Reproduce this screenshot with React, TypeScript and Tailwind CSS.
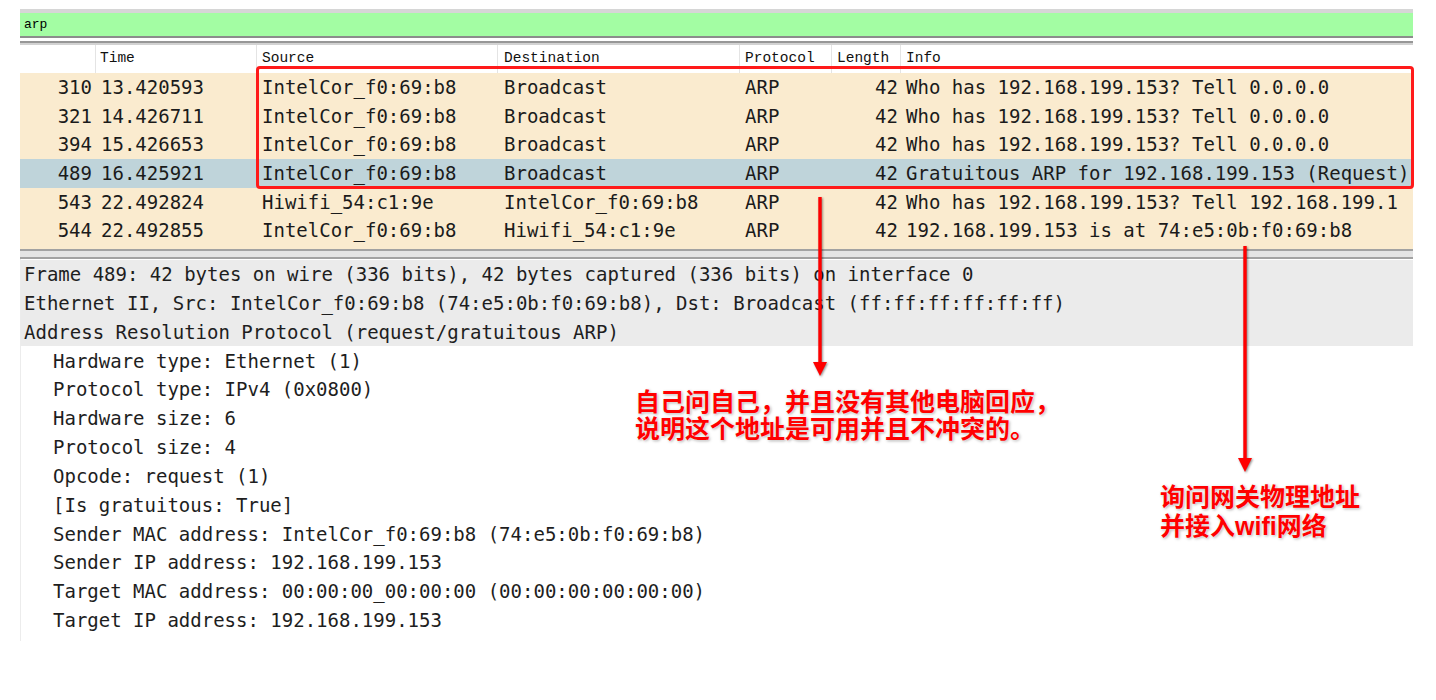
import React from 'react';

interface Packet {
  no: string;
  time: string;
  src: string;
  dst: string;
  proto: string;
  len: string;
  info: string;
  selected?: boolean;
}

const packets: Packet[] = [
  { no: '310', time: '13.420593', src: 'IntelCor_f0:69:b8', dst: 'Broadcast', proto: 'ARP', len: '42', info: 'Who has 192.168.199.153? Tell 0.0.0.0' },
  { no: '321', time: '14.426711', src: 'IntelCor_f0:69:b8', dst: 'Broadcast', proto: 'ARP', len: '42', info: 'Who has 192.168.199.153? Tell 0.0.0.0' },
  { no: '394', time: '15.426653', src: 'IntelCor_f0:69:b8', dst: 'Broadcast', proto: 'ARP', len: '42', info: 'Who has 192.168.199.153? Tell 0.0.0.0' },
  { no: '489', time: '16.425921', src: 'IntelCor_f0:69:b8', dst: 'Broadcast', proto: 'ARP', len: '42', info: 'Gratuitous ARP for 192.168.199.153 (Request)', selected: true },
  { no: '543', time: '22.492824', src: 'Hiwifi_54:c1:9e', dst: 'IntelCor_f0:69:b8', proto: 'ARP', len: '42', info: 'Who has 192.168.199.153? Tell 192.168.199.1' },
  { no: '544', time: '22.492855', src: 'IntelCor_f0:69:b8', dst: 'Hiwifi_54:c1:9e', proto: 'ARP', len: '42', info: '192.168.199.153 is at 74:e5:0b:f0:69:b8' },
];

// summary lines are shaded, the fields below are indented
const details: { text: string; top?: boolean }[] = [
  { text: 'Frame 489: 42 bytes on wire (336 bits), 42 bytes captured (336 bits) on interface 0', top: true },
  { text: 'Ethernet II, Src: IntelCor_f0:69:b8 (74:e5:0b:f0:69:b8), Dst: Broadcast (ff:ff:ff:ff:ff:ff)', top: true },
  { text: 'Address Resolution Protocol (request/gratuitous ARP)', top: true },
  { text: 'Hardware type: Ethernet (1)' },
  { text: 'Protocol type: IPv4 (0x0800)' },
  { text: 'Hardware size: 6' },
  { text: 'Protocol size: 4' },
  { text: 'Opcode: request (1)' },
  { text: '[Is gratuitous: True]' },
  { text: 'Sender MAC address: IntelCor_f0:69:b8 (74:e5:0b:f0:69:b8)' },
  { text: 'Sender IP address: 192.168.199.153' },
  { text: 'Target MAC address: 00:00:00_00:00:00 (00:00:00:00:00:00)' },
  { text: 'Target IP address: 192.168.199.153' },
];

const cols = 'grid grid-cols-[76px_161px_241px_242px_92px_69px_512px]';

const Arrow: React.FC<{ className: string; height: number }> = ({ className, height }) => (
  <svg
    className={`absolute drop-shadow-[1px_1px_1px_rgba(0,0,0,0.45)] ${className}`}
    width="20"
    height={height}
    viewBox={`0 0 20 ${height}`}
  >
    <rect x="8.3" y="2" width="3.4" height={height - 16} fill="#ff0000" />
    <polygon points={`3,${height - 17} 17,${height - 17} 10,${height - 3}`} fill="#ff0000" />
  </svg>
);

const App: React.FC = () => {
  return (
    <div className="relative w-[1436px] h-[700px] bg-white overflow-hidden text-[#1b1b1b]">
      <div className="pt-[9px] pl-[20px] w-[1413px]">
        {/* filter toolbar */}
        <div className="h-[4px] bg-[#d6d6d6]" />
        <div className="h-[25px] bg-[#a3fda3] border-b-2 border-[#8c8c8c] flex items-center pl-[4px] font-['Liberation_Mono',monospace] text-[13px] text-black">
          arp
        </div>
        <div className="h-[3px]" />
        <div className="h-[4px] border-t-2 border-[#979797] bg-[#d2d2d2]" />

        {/* packet list */}
        <div className={`${cols} h-[28px] items-center bg-white font-['Liberation_Mono',monospace] text-[14.5px] text-[#111]`}>
          <div className="h-full border-r border-[#e4e4e4]" />
          <div className="h-full flex items-center pl-[4px] border-r border-[#e4e4e4]">Time</div>
          <div className="h-full flex items-center pl-[5px] border-r border-[#e4e4e4]">Source</div>
          <div className="h-full flex items-center pl-[6px] border-r border-[#e4e4e4]">Destination</div>
          <div className="h-full flex items-center pl-[5px] border-r border-[#e4e4e4]">Protocol</div>
          <div className="h-full flex items-center pl-[5px] border-r border-[#e4e4e4]">Length</div>
          <div className="h-full flex items-center pl-[5px]">Info</div>
        </div>
        <div className="bg-[#faebcf] pb-[4px] font-['DejaVu_Sans_Mono',monospace] text-[19px] whitespace-pre">
          {packets.map((p) => (
            <div
              key={p.no}
              className={`${cols} h-[28.67px] items-center pb-[1px] ${p.selected ? 'bg-[#bfd4da]' : ''}`}
            >
              <div className="text-right pr-[4px]">{p.no}</div>
              <div className="pl-[5px]">{p.time}</div>
              <div className="pl-[5px]">{p.src}</div>
              <div className="pl-[6px]">{p.dst}</div>
              <div className="pl-[5px]">{p.proto}</div>
              <div className="text-right pr-[3px]">{p.len}</div>
              <div className="pl-[5px]">{p.info}</div>
            </div>
          ))}
        </div>

        {/* splitter */}
        <div className="h-[10px] border-t-2 border-b-2 border-[#a2a2a2] bg-[#e4e4e4]" />

        {/* packet details */}
        <div className="h-[382px] border-l border-[#ececec] pt-[1px] font-['DejaVu_Sans_Mono',monospace] text-[19px] whitespace-pre text-[#1e1e1e]">
          {details.map((d, i) => (
            <div
              key={i}
              className={`h-[28.83px] flex items-center ${d.top ? 'bg-[#ebebeb] pl-[3px]' : 'pl-[32px]'}`}
            >
              {d.text}
            </div>
          ))}
        </div>
      </div>

      {/* annotations */}
      <div className="absolute left-[256px] top-[66px] w-[1158px] h-[123px] border-[3px] border-[#ff1a1a] rounded-[4px]" />
      <Arrow className="left-[810px] top-[195px]" height={184} />
      <Arrow className="left-[1235px] top-[244px]" height={231} />

      <div className="absolute left-[635px] top-[389px] font-['Liberation_Sans','Noto_Sans_CJK_SC',sans-serif] font-bold text-[25px] leading-[27px] text-[#ff0000] [text-shadow:0_0_2px_#ffffff,1px_1px_3px_rgba(0,0,0,0.35)]">
        <div>自己问自己，并且没有其他电脑回应，</div>
        <div>说明这个地址是可用并且不冲突的。</div>
      </div>
      <div className="absolute left-[1160px] top-[483px] font-['Liberation_Sans','Noto_Sans_CJK_SC',sans-serif] font-bold text-[25px] leading-[29px] text-[#ff0000] [text-shadow:0_0_2px_#ffffff,1px_1px_3px_rgba(0,0,0,0.35)]">
        <div>询问网关物理地址</div>
        <div>并接入wifi网络</div>
      </div>
    </div>
  );
};

export default App;
